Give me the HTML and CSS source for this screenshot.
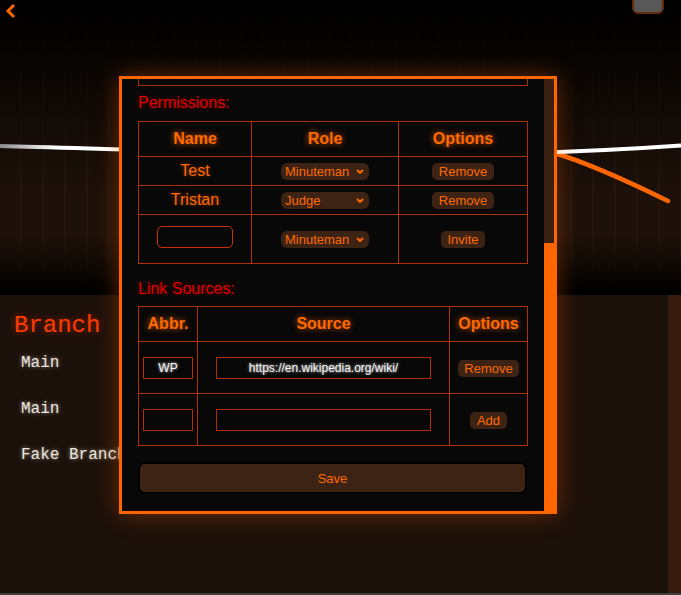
FILE: index.html
```html
<!DOCTYPE html>
<html lang="en">
<head>
<meta charset="utf-8">
<title>Branch settings</title>
<link rel="stylesheet" href="styles.css">
</head>
<body>
<div class="page">
  <header class="banner">
    <svg class="curves" viewBox="0 0 681 295" width="681" height="295" aria-hidden="true">
      <defs>
        <linearGradient id="wl" x1="0" y1="0" x2="1" y2="0">
          <stop offset="0" stop-color="#8c8c8c"/>
          <stop offset="0.08" stop-color="#ffffff"/>
          <stop offset="1" stop-color="#ffffff"/>
        </linearGradient>
      </defs>
      <path d="M553 152.5 Q595 165 668 201" fill="none" stroke="#ff6600" stroke-width="4.5" stroke-linecap="round"/>
      <path d="M0 146 C227 152 454 162 681 145.5" fill="none" stroke="url(#wl)" stroke-width="4"/>
    </svg>
    <button class="back" aria-label="Back">
      <svg viewBox="0 0 12 16" width="12" height="16"><polyline points="9,2 3,8 9,14"/></svg>
    </button>
    <span class="corner-btn"></span>
  </header>
  <div class="lower">
    <main class="branches">
      <h2 class="branch-title">Branch</h2>
      <ul class="branch-list">
        <li>Main</li>
        <li>Main</li>
        <li>Fake Branch</li>
      </ul>
    </main>
    <div class="page-scroll"></div>
  </div>
  <div class="hbar"></div>
</div>

<div class="modal">
  <div class="modal-body">
    <div class="prev-box"></div>
    <p class="section-label">Permissions:</p>
    <table class="grid perms">
      <colgroup><col class="c1"><col class="c2"><col class="c3"></colgroup>
      <tr class="hd"><th>Name</th><th>Role</th><th>Options</th></tr>
      <tr class="r1">
        <td class="who">Test</td>
        <td><span class="sel"><select><option selected>Minuteman</option><option>Judge</option></select><svg class="chev" viewBox="0 0 8 5"><path d="M1 1l3 3 3-3"/></svg></span></td>
        <td><button class="btn">Remove</button></td>
      </tr>
      <tr class="r1">
        <td class="who">Tristan</td>
        <td><span class="sel"><select><option>Minuteman</option><option selected>Judge</option></select><svg class="chev" viewBox="0 0 8 5"><path d="M1 1l3 3 3-3"/></svg></span></td>
        <td><button class="btn">Remove</button></td>
      </tr>
      <tr class="r3">
        <td><input class="name-input" type="text"></td>
        <td><span class="sel"><select><option selected>Minuteman</option><option>Judge</option></select><svg class="chev" viewBox="0 0 8 5"><path d="M1 1l3 3 3-3"/></svg></span></td>
        <td><button class="btn">Invite</button></td>
      </tr>
    </table>

    <p class="section-label second">Link Sources:</p>
    <table class="grid links">
      <colgroup><col class="l1"><col class="l2"><col class="l3"></colgroup>
      <tr class="hd"><th>Abbr.</th><th>Source</th><th>Options</th></tr>
      <tr class="lr">
        <td><input class="field abbr" type="text" value="WP"></td>
        <td><input class="field src" type="text" value="https://en.wikipedia.org/wiki/"></td>
        <td><button class="btn">Remove</button></td>
      </tr>
      <tr class="lr">
        <td><input class="field abbr" type="text"></td>
        <td><input class="field src" type="text"></td>
        <td><button class="btn">Add</button></td>
      </tr>
    </table>

    <button class="save">Save</button>
  </div>
  <div class="scroll"><div class="track"></div><div class="thumb"></div></div>
</div>
</body>
</html>
```

FILE: styles.css
```css
html, body {
  margin: 0;
  padding: 0;
  width: 681px;
  height: 595px;
  overflow: hidden;
  background: #1c100a;
  font-family: "Liberation Sans", Arial, sans-serif;
}

.page {
  display: flex;
  flex-direction: column;
  height: 595px;
}

.banner {
  position: relative;
  flex: 0 0 295px;
  display: flex;
  justify-content: space-between;
  align-items: flex-start;
  background:
    linear-gradient(to bottom, #000 0px, rgba(0,0,0,0.85) 40px, rgba(0,0,0,0.05) 200px, rgba(0,0,0,0.05) 235px, #000 293px),
    repeating-linear-gradient(90deg, rgba(0,0,0,0) 0px, rgba(0,0,0,0) 20px, rgba(110,50,20,0.13) 20px, rgba(110,50,20,0.13) 22px),
    #1f120a;
}

.curves {
  position: absolute;
  left: 0;
  top: 0;
  pointer-events: none;
}

.back {
  position: relative;
  margin: 3px 0 0 5px;
  padding: 0;
  border: 0;
  background: none;
  width: 12px;
  height: 16px;
  display: flex;
}
.back svg polyline {
  fill: none;
  stroke: #ff6600;
  stroke-width: 3;
}

.corner-btn {
  position: relative;
  margin: -10px 17px 0 0;
  width: 32px;
  height: 24px;
  box-sizing: border-box;
  background: #585858;
  border: 2px solid #62290f;
  border-radius: 6px;
}

.lower {
  flex: 1;
  display: flex;
}

.branches {
  flex: 1;
  background: #1c100a;
  padding-top: 17px;
}

.branch-title {
  margin: 0 0 0 14px;
  font: normal 24px/27px "Liberation Mono", "Courier New", monospace;
  color: #ff3c00;
  text-shadow: 0 0 6px rgba(255, 60, 0, 0.55);
}

.branch-list {
  list-style: none;
  margin: 0;
  padding: 0;
}
.branch-list li {
  padding: 15px 0 13px 21px;
  font: 16px/18px "Liberation Mono", "Courier New", monospace;
  color: #efe6dc;
  text-shadow: 0 0 4px rgba(255, 255, 255, 0.55);
}

.page-scroll {
  flex: 0 0 13px;
  background: #371c0e;
}

.hbar {
  flex: 0 0 2px;
  background: #3e3e3e;
}

/* Modal */
.modal {
  position: absolute;
  left: 119px;
  top: 76px;
  width: 438px;
  height: 438px;
  box-sizing: border-box;
  border: 3px solid #ff6600;
  background: #080808;
  display: flex;
  box-shadow: 0 0 22px rgba(255, 102, 0, 0.35);
  z-index: 2;
}

.modal-body {
  flex: 1;
  overflow: hidden;
  padding: 0 16px 0 16px;
}

.scroll {
  flex: 0 0 10px;
  display: flex;
  flex-direction: column;
}
.track {
  flex: 0 0 164px;
  background: #3b2011;
}
.thumb {
  flex: 1;
  background: #ff6600;
}

.prev-box {
  width: 388px;
  height: 6px;
  border: 1px solid #a83000;
  border-top: 0;
}

.section-label {
  margin: 8px 0 9px;
  font-size: 16px;
  line-height: 18px;
  color: #dd0000;
  text-shadow: 0 0 4px rgba(255, 0, 0, 0.45);
}
.section-label.second {
  margin: 16px 0 8px;
}

.grid {
  border-collapse: collapse;
  table-layout: fixed;
  width: 389px;
}
.grid th, .grid td {
  border: 1px solid #b03000;
  padding: 0;
  text-align: center;
  vertical-align: middle;
}
.grid th {
  font-size: 16px;
  font-weight: bold;
  color: #ff6a00;
  text-shadow: 0 0 6px rgba(255, 102, 0, 0.8);
}

.perms .c1 { width: 113px; }
.perms .c2 { width: 147px; }
.perms .c3 { width: 129px; }
.links .l1 { width: 59px; }
.links .l2 { width: 252px; }
.links .l3 { width: 78px; }

.grid tr.hd th { height: 34px; }
.perms tr.r1 td { height: 28px; }
.perms tr.r3 td { height: 48px; }
.links tr.lr td { height: 51px; }

.who {
  font-size: 16px;
  color: #ff6a00;
  text-shadow: 0 0 4px rgba(255, 102, 0, 0.5);
}

.sel {
  display: inline-flex;
  align-items: center;
  width: 88px;
  height: 17px;
  background: #3d2314;
  border-radius: 6px;
  vertical-align: middle;
}
.sel select {
  -webkit-appearance: none;
  appearance: none;
  flex: 1;
  min-width: 0;
  height: 17px;
  margin: 0;
  padding: 0 0 0 4px;
  border: 0;
  outline: none;
  background: transparent;
  color: #ff6a00;
  font: 13px/17px "Liberation Sans", Arial, sans-serif;
}
.chev {
  flex: 0 0 8px;
  height: 5px;
  margin-right: 5px;
  fill: none;
  stroke: #ff6a00;
  stroke-width: 2;
}

.btn {
  height: 17px;
  padding: 0 6.5px;
  border: 0;
  border-radius: 5px;
  background: #3d2314;
  color: #ff6a00;
  font: 13px/17px "Liberation Sans", Arial, sans-serif;
  vertical-align: middle;
}

.name-input {
  display: block;
  margin: 0 auto 4px;
  width: 76px;
  height: 22px;
  box-sizing: border-box;
  border: 1px solid #cc3300;
  border-radius: 5px;
  background: transparent;
}

.field {
  display: block;
  margin: 0 auto;
  height: 22px;
  box-sizing: border-box;
  border: 1px solid #b32d00;
  border-radius: 0;
  background: #080808;
  color: #f4f4f4;
  font: 12px "Liberation Sans", Arial, sans-serif;
  text-align: center;
  text-shadow: 0 0 3px rgba(255, 255, 255, 0.85);
  padding: 0;
}
.field.abbr { width: 50px; }
.field.src { width: 215px; }

.save {
  display: block;
  width: 389px;
  height: 32px;
  margin-top: 16px;
  box-sizing: border-box;
  border: 2px solid #000;
  border-radius: 7px;
  background: #3d2314;
  color: #ff6a00;
  font: 13px "Liberation Sans", Arial, sans-serif;
}
```
